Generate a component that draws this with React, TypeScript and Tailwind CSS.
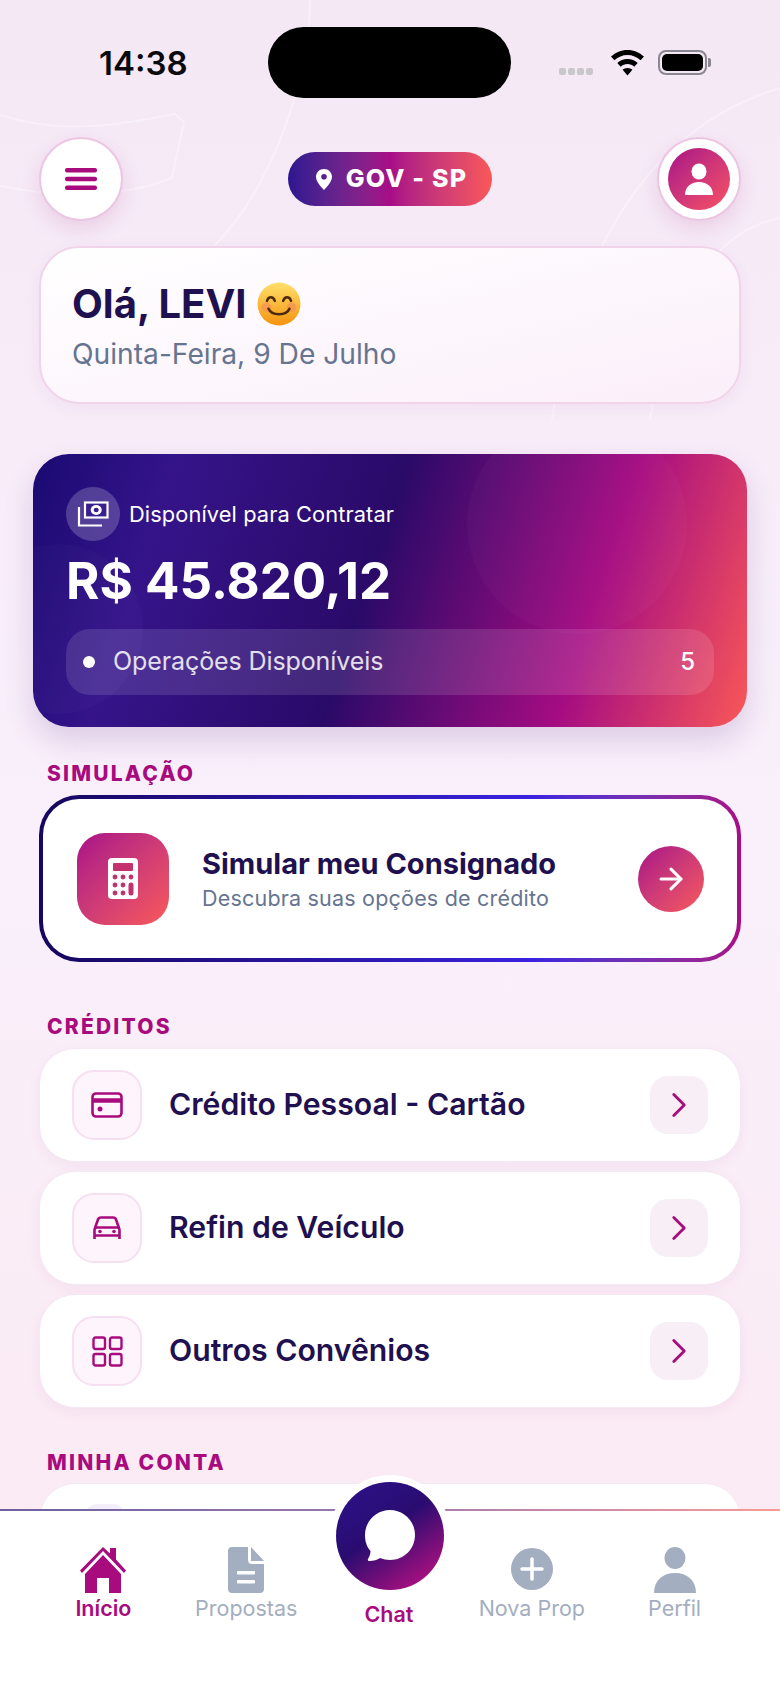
import React from 'react';
import { ArrowRight, ChevronRight } from 'lucide-react';

const font = { fontFamily: 'Inter' };

// nav item label + icon
const NavItem = ({ label, icon, active = false }: { label: string; icon: React.ReactNode; active?: boolean }) => (
  <div className="flex flex-col items-center">
    <div className="h-[46px] flex items-end justify-center">{icon}</div>
    <span className={`text-[21.5px] leading-[30px] whitespace-nowrap ${active ? 'font-semibold text-[#a80b7e]' : 'text-[#a3aec0]'}`}>{label}</span>
  </div>
);

const CreditRow = ({ title, icon }: { title: string; icon: React.ReactNode }) => (
  <div className="h-[114px] flex items-center rounded-[36px] border border-[#f4e8f3] bg-white pl-[32px] pr-[32px] shadow-[0_4px_14px_rgba(160,40,130,0.06)]">
    <div className="w-[70px] h-[70px] flex items-center justify-center rounded-[22px] border-2 border-[#f6dff0] bg-[#fdf5fb]">{icon}</div>
    <span className="ml-[27px] flex-1 text-[30.2px] font-semibold text-[#1f1050]">{title}</span>
    <div className="w-[58px] h-[58px] flex items-center justify-center rounded-[18px] bg-[#f8eef6]">
      <ChevronRight size={42} strokeWidth={1.6} className="text-[#a80b7e]" />
    </div>
  </div>
);

const SectionLabel = ({ children, className = '' }: { children: React.ReactNode; className?: string }) => (
  <div className={`pl-[47px] text-[21px] leading-[26px] font-extrabold tracking-[2.2px] text-[#a80b7e] ${className}`}>{children}</div>
);

export default function App() {
  return (
    <div style={font} className="relative w-[780px] h-[1695px] overflow-hidden flex flex-col bg-gradient-to-b from-[#f5e8f5] via-[#f9f0fb] to-[#fbe9f1]">
      {/* faint background curves */}
      <svg className="absolute inset-0 pointer-events-none" width="780" height="700" fill="none" stroke="#ffffff" strokeOpacity="0.35" strokeWidth="2">
        <path d="M0 115 C60 135 120 125 175 114 L184 122 L172 178 C130 195 70 200 0 186" />
        <path d="M552 420 C570 270 640 130 780 88" />
        <path d="M650 420 C670 290 720 230 780 218" />
        <path d="M310 0 C310 80 270 190 215 245" />
      </svg>

      {/* scroll area */}
      <main className="relative flex-1 min-h-0 overflow-hidden">
        {/* status bar */}
        <div className="relative h-[137px]">
          <div className="absolute left-[99px] top-[44px] text-[33px] leading-[38px] font-semibold text-[#0b0b0f]">14:38</div>
          <div className="absolute left-[268px] top-[27px] w-[243px] h-[71px] rounded-[36px] bg-black" />
          <div className="absolute left-[559px] top-[68px] flex gap-[2px]">
            <span className="w-[7px] h-[7px] rounded-[2px] bg-[#c9c6cc]" />
            <span className="w-[7px] h-[7px] rounded-[2px] bg-[#c9c6cc]" />
            <span className="w-[7px] h-[7px] rounded-[2px] bg-[#c9c6cc]" />
            <span className="w-[7px] h-[7px] rounded-[2px] bg-[#c9c6cc]" />
          </div>
          <svg className="absolute left-[611px] top-[50px]" width="33" height="26" viewBox="0 0 33 26" fill="#000">
            <path d="M16.5 0C10 0 4.6 2.5 0 6.6l3.4 3.7C7.2 7 11.5 5 16.5 5s9.3 2 13.1 5.3L33 6.6C28.4 2.5 23 0 16.5 0z" />
            <path d="M16.5 9c-4 0-7.4 1.5-10.2 4l3.4 3.7c1.9-1.6 4.2-2.7 6.8-2.7s4.9 1.1 6.8 2.7l3.4-3.7c-2.8-2.5-6.2-4-10.2-4z" />
            <path d="M16.5 18c-2 0-3.6.7-4.9 1.8l4.9 5.6 4.9-5.6c-1.3-1.1-2.9-1.8-4.9-1.8z" />
          </svg>
          <div className="absolute left-[658px] top-[50px] w-[49px] h-[25px] rounded-[8px] border-2 border-[#8a8790] p-[2px]">
            <div className="w-full h-full rounded-[5px] bg-black" />
          </div>
          <div className="absolute left-[708px] top-[58px] w-[3px] h-[9px] rounded-r-[2px] bg-[#8a8790]" />
        </div>

        {/* header */}
        <header className="flex items-center justify-between px-[39px] h-[84px]">
          <button className="w-[84px] h-[84px] flex items-center justify-center rounded-full border-2 border-[#ecc5e2] bg-white shadow-[0_8px_20px_rgba(160,40,130,0.14)]">
            <svg width="32" height="22" viewBox="0 0 32 22" fill="#a80b7e">
              <rect width="32" height="4.5" rx="2" />
              <rect y="8.7" width="32" height="4.5" rx="2" />
              <rect y="17.5" width="32" height="4.5" rx="2" />
            </svg>
          </button>
          <div className="h-[54px] w-[204px] flex items-center justify-center gap-[14px] rounded-full bg-gradient-to-r from-[#2e1590] via-[#a80b87] to-[#f95857] pl-[3px] text-white">
            <svg width="16" height="21" viewBox="0 0 16 21">
              <path fillRule="evenodd" fill="#fff" d="M8 0c4.500 0 8 3.400 8 7.800C16 12.500 11 18 8 21 5 18 0 12.500 0 7.800 0 3.400 3.500 0 8 0zm0 5a2.800 2.800 0 1 0 0 5.600A2.800 2.800 0 0 0 8 5z" />
            </svg>
            <span className="text-[25px] font-extrabold tracking-[1.2px]">GOV - SP</span>
          </div>
          <div className="w-[84px] h-[84px] flex items-center justify-center rounded-full border-2 border-[#ecc5e2] bg-white shadow-[0_8px_20px_rgba(160,40,130,0.14)]">
            <div className="w-[62px] h-[62px] flex items-center justify-center rounded-full bg-gradient-to-br from-[#a80b87] to-[#f95060]">
              <svg width="30" height="32" viewBox="0 0 30 32" fill="#fff">
                <ellipse cx="15" cy="8.500" rx="7.500" ry="8" />
                <path d="M1 32c0-8 6-13 14-13s14 5 14 13z" />
              </svg>
            </div>
          </div>
        </header>

        {/* greeting */}
        <section className="mx-[39px] mt-[25px] h-[158px] rounded-[40px] border-2 border-[#f0d4ea] bg-gradient-to-br from-white to-[#fbeffa] pl-[31px] pt-[31px] shadow-[0_4px_16px_rgba(160,40,130,0.06)]">
          <div className="flex items-center gap-[10px] h-[50px]">
            <span className="text-[40px] leading-[50px] font-bold text-[#1f1050]">Olá, LEVI</span>
            <svg width="44" height="44" viewBox="0 0 42 42">
              <defs>
                <linearGradient id="smile" x1="0" y1="0" x2="0" y2="1">
                  <stop offset="0" stopColor="#ffe06a" />
                  <stop offset="1" stopColor="#f4930f" />
                </linearGradient>
              </defs>
              <circle cx="21" cy="21" r="20.500" fill="url(#smile)" />
              <circle cx="9" cy="24" r="4.500" fill="#f7806a" opacity="0.5" />
              <circle cx="33" cy="24" r="4.500" fill="#f7806a" opacity="0.5" />
              <path d="M9.500 18c1.500-4.500 6-4.500 7.500 0M25 18c1.500-4.500 6-4.500 7.500 0" fill="none" stroke="#4e2a0c" strokeWidth="2.400" strokeLinecap="round" />
              <path d="M11 25.500c3 7 17 7 20 0" fill="none" stroke="#4e2a0c" strokeWidth="2.400" strokeLinecap="round" />
            </svg>
          </div>
          <div className="mt-[7px] text-[28.2px] leading-[36px] text-[#66748f]">Quinta-Feira, 9 De Julho</div>
        </section>

        {/* balance card */}
        <section className="relative mx-[33px] mt-[50px] h-[273px] overflow-hidden rounded-[36px] bg-[linear-gradient(108deg,#1a0a72_0%,#35148a_18%,#2a0a68_47%,#a50c82_76%,#f95857_100%)] pl-[33px] pr-[33px] pt-[33px] text-white shadow-[0_14px_30px_rgba(80,20,120,0.16)]">
          <div className="absolute right-[60px] top-[-40px] w-[220px] h-[220px] rounded-full bg-white/[0.025]" />
          <div className="absolute left-[-60px] top-[90px] w-[170px] h-[170px] rounded-full bg-white/[0.02]" />
          <div className="relative flex items-center gap-[9px]">
            <div className="w-[54px] h-[54px] flex items-center justify-center rounded-full bg-white/20">
              <svg width="32" height="26" viewBox="0 0 32 26" fill="none" stroke="#fff" strokeWidth="2.200">
                <rect x="8" y="1.500" width="22.500" height="15" fill="#3a1f8e" />
                <ellipse cx="19.200" cy="9" rx="5.500" ry="5" fill="#fff" stroke="none" />
                <ellipse cx="19.200" cy="9" rx="2.500" ry="2.300" fill="#3a1f8e" stroke="none" />
                <path d="M2 6v18.500h23" />
              </svg>
            </div>
            <span className="text-[21.8px] tracking-[0.1px]">Disponível para Contratar</span>
          </div>
          <div className="relative mt-[10px] text-[51px] leading-[60px] font-bold whitespace-nowrap">R$ 45.820,12</div>
          <div className="relative mt-[18px] h-[66px] flex items-center rounded-[24px] bg-white/[0.12] pl-[17px] pr-[19px]">
            <span className="w-[12px] h-[12px] rounded-full bg-white" />
            <span className="ml-[18px] flex-1 text-[25px] tracking-[-0.1px] text-white/85">Operações Disponíveis</span>
            <span className="text-[24px] font-medium">5</span>
          </div>
        </section>

        <SectionLabel className="mt-[34px]">SIMULAÇÃO</SectionLabel>

        {/* simulate */}
        <section className="mx-[39px] mt-[8px] h-[167px] rounded-[40px] bg-gradient-to-r from-[#16075f] via-[#3a22e0] via-70% to-[#a80b87] p-[4px]">
          <div className="h-full flex items-center rounded-[36px] bg-white pl-[34px] pr-[33px]">
            <div className="w-[92px] h-[92px] flex items-center justify-center rounded-[28px] bg-gradient-to-br from-[#a80b87] to-[#f95858]">
              <svg width="30" height="41" viewBox="0 0 30 41">
                <rect width="30" height="41" rx="4" fill="#fff" />
                <rect x="5" y="5" width="20" height="8" rx="1" fill="#c5306f" />
                <g fill="#c5306f">
                  <circle cx="7" cy="19" r="2.400" /><circle cx="15" cy="19" r="2.400" /><circle cx="23" cy="19" r="2.400" />
                  <circle cx="7" cy="27" r="2.400" /><circle cx="15" cy="27" r="2.400" />
                  <circle cx="7" cy="35" r="2.400" /><circle cx="15" cy="35" r="2.400" />
                  <rect x="20.500" y="24.500" width="5" height="13" rx="2.500" />
                </g>
              </svg>
            </div>
            <div className="ml-[33px] flex-1">
              <div className="text-[29px] leading-[38px] font-bold text-[#1f1050]">Simular meu Consignado</div>
              <div className="text-[21.5px] leading-[30px] tracking-[0.2px] text-[#66748f]">Descubra suas opções de crédito</div>
            </div>
            <div className="w-[66px] h-[66px] flex items-center justify-center rounded-full bg-gradient-to-br from-[#a80b87] to-[#f95858]">
              <ArrowRight size={34} strokeWidth={2.2} className="text-white" />
            </div>
          </div>
        </section>

        <SectionLabel className="mt-[52px]">CRÉDITOS</SectionLabel>

        <div className="mx-[39px] mt-[8px] flex flex-col gap-[9px]">
          <CreditRow
            title="Crédito Pessoal - Cartão"
            icon={
              <svg width="32" height="26" viewBox="0 0 32 26" fill="none" stroke="#a80b7e" strokeWidth="2.600">
                <rect x="1.500" y="1.500" width="29" height="23" rx="3.500" />
                <path d="M1.500 8.500h29" strokeWidth="4.500" />
                <circle cx="9" cy="17" r="2.500" fill="#a80b7e" stroke="none" />
              </svg>
            }
          />
          <CreditRow
            title="Refin de Veículo"
            icon={
              <svg width="28" height="24" viewBox="0 0 28 24" fill="none" stroke="#a80b7e" strokeWidth="2.600">
                <path d="M2 12 5 3.500C5.500 2 6.500 1.500 8 1.500h12c1.500 0 2.500.5 3 2L26 12" />
                <path d="M1.500 23V14c0-1.500 1-2.500 2.500-2.500h20c1.500 0 2.500 1 2.500 2.500v9M1.500 19.500h25" />
                <circle cx="7" cy="15.500" r="1.800" fill="#a80b7e" stroke="none" />
                <circle cx="21" cy="15.500" r="1.800" fill="#a80b7e" stroke="none" />
              </svg>
            }
          />
          <CreditRow
            title="Outros Convênios"
            icon={
              <svg width="31" height="31" viewBox="0 0 31 31" fill="none" stroke="#a80b7e" strokeWidth="2.400">
                <rect x="1.500" y="1.500" width="11.500" height="11.500" rx="2" />
                <rect x="18" y="1.500" width="11.500" height="11.500" rx="2" />
                <rect x="1.500" y="18" width="11.500" height="11.500" rx="2" />
                <rect x="18" y="18" width="11.500" height="11.500" rx="2" />
              </svg>
            }
          />
        </div>

        <SectionLabel className="mt-[42px]">MINHA CONTA</SectionLabel>
        <div className="mx-[39px] mt-[7px] h-[114px] rounded-[36px] border border-[#f4e8f3] bg-white pl-[44px] pt-[20px]">
          <div className="w-[42px] h-[70px] rounded-[14px] bg-[#f3eefa]" />
        </div>
      </main>

      {/* bottom nav */}
      <nav className="relative h-[186px] shrink-0 bg-white">
        <div className="h-[2px] bg-gradient-to-r from-[#6d5f9e] via-[#a07ab0] to-[#fb9a96]" />
        <div className="absolute left-[329px] top-[-34px] w-[122px] h-[122px] rounded-full bg-white" />
        <div className="absolute left-[336px] top-[-27px] w-[108px] h-[108px] flex items-center justify-center rounded-full bg-[linear-gradient(145deg,#2b128c_0%,#2a0c70_45%,#cc1184_100%)]">
          <svg width="52" height="54" viewBox="0 0 52 54" fill="#fff">
            <path d="M26 1c13.500 0 25 11 25 25s-11 25-25 25c-3.500 0-7-.7-10-2-2.500 2-6.500 3-10.500 3-1.500 0-2-1-1.500-2 1.500-2.500 2.500-5 2.500-8C2.500 37.500 1 32 1 26 1 12 12.500 1 26 1z" />
          </svg>
        </div>
        <div className="grid grid-cols-5 pl-[32px] pr-[34px] pt-[36px]">
          <NavItem
            active
            label="Início"
            icon={
              <svg width="48" height="46" viewBox="0 0 48 46">
                <path fill="#a80b7e" d="M24 0 31 6.500V1h6v11.500l10 11-2 2.500L24 4 3 26l-2-2.500z" />
                <path fill="#a80b7e" d="M24 8 42 27v19H30V31H18v15H6V27z" />
              </svg>
            }
          />
          <NavItem
            label="Propostas"
            icon={
              <svg width="36" height="46" viewBox="0 0 36 46">
                <path fill="#a3aec0" d="M4 0h16v13c0 2.500 1.500 4 4 4h12v25c0 2.500-1.500 4-4 4H4c-2.500 0-4-1.500-4-4V4c0-2.500 1.500-4 4-4zM23 0l13 14H23z" />
                <rect x="9" y="24" width="18" height="3.500" rx="1" fill="#fff" />
                <rect x="9" y="33" width="18" height="3.500" rx="1" fill="#fff" />
              </svg>
            }
          />
          <div className="flex justify-center pt-[52px]">
            <span className="text-[21.5px] leading-[30px] font-semibold text-[#a80b7e]">Chat</span>
          </div>
          <NavItem
            label="Nova Prop"
            icon={
              <svg className="mb-[3px]" width="42" height="42" viewBox="0 0 42 42">
                <circle cx="21" cy="21" r="21" fill="#a3aec0" />
                <path d="M21 11v20M11 21h20" stroke="#fff" strokeWidth="3.500" strokeLinecap="round" />
              </svg>
            }
          />
          <NavItem
            label="Perfil"
            icon={
              <svg width="42" height="46" viewBox="0 0 42 46" fill="#a3aec0">
                <ellipse cx="21" cy="11" rx="10.500" ry="11" />
                <path d="M0 46c0-13 9-20 21-20s21 7 21 20z" />
              </svg>
            }
          />
        </div>
      </nav>
    </div>
  );
}
